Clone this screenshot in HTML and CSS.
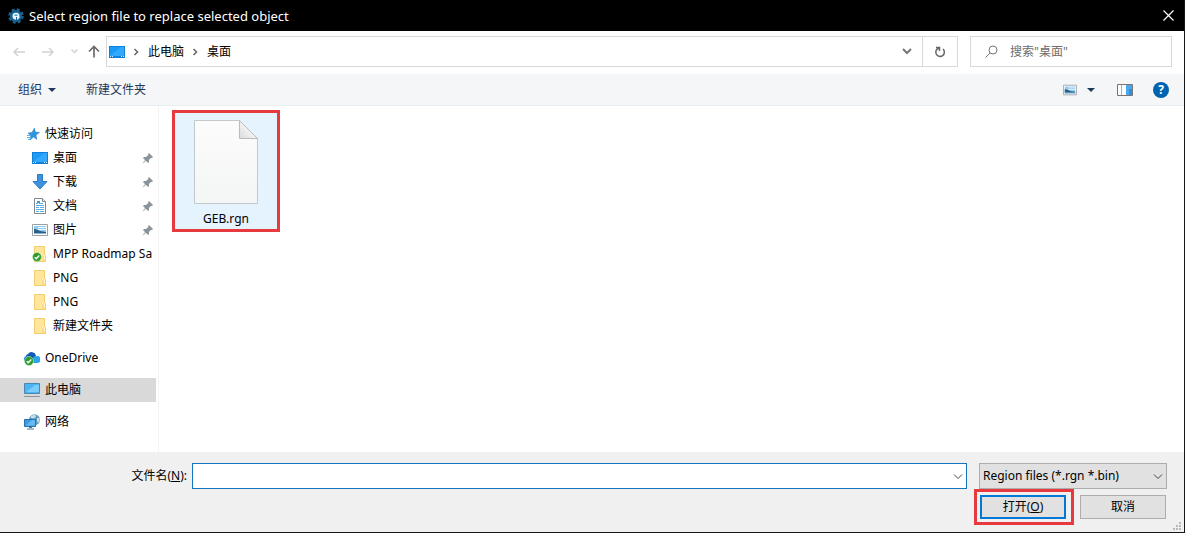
FILE: index.html
```html
<!DOCTYPE html>
<html lang="zh-CN">
<head>
  <meta charset="UTF-8">
  <meta name="viewport" content="width=device-width, initial-scale=1.0">
  <title>Select region file to replace selected object</title>
  <link rel="stylesheet" href="styles.css">
</head>
<body>

<!-- Shared icons -->
<svg class="sprite" aria-hidden="true">
  <symbol id="icon-desktop" viewBox="0 0 16 16">
    <path fill="#1180d8" d="M0 2h16v12H0z"/>
    <path fill="#1b9bf8" d="M1 3h14v9H1z"/>
    <path fill="#34a8fb" d="M1 12 12 3h3v9z"/>
    <path fill="#d8efff" d="M1 12h1v1H1zM3 12h1v1H3zM12 12h1v1h-1zM14 12h1v1h-1z"/>
  </symbol>
  <symbol id="icon-picture" viewBox="0 0 16 16">
    <path fill="#fff" stroke="#9aa1a6" d="M.5 2.500h15v11H.5z"/>
    <path fill="#8fcbf2" d="M2 4h12v8H2z"/>
    <path fill="#eef8fd" d="M6 5h8v1H6zM5 7h9v1H6z"/>
    <path fill="#2d5f82" d="M2 7c3 0 4 1 6 2l6 1v1H2z"/>
    <path fill="#86b8d8" d="M2 11h12v1H2z"/>
  </symbol>
  <symbol id="icon-folder" viewBox="0 0 16 16">
    <path fill="#f0cf72" d="M2 0h11v9h1v7H2z"/>
    <path fill="#ffe69a" d="M3 1h9v14H3z"/>
    <path fill="#fbdc80" d="M10 10h3v5h-3z"/>
    <path fill="#fff3c8" d="M12 9h1v5h-1z"/>
  </symbol>
  <symbol id="icon-pin" viewBox="0 0 12 12">
    <path fill="#8a949c" d="M7 1l4 4-1 1-1-.3L7 8v2L6 11 3.800 8.800 1.500 11 1 10.500 3.200 8.200 1 6l1-1h2l2.300-2L6 2z"/>
  </symbol>
  <symbol id="icon-check" viewBox="0 0 10 10">
    <circle cx="5" cy="5" r="4.500" fill="#2e9b2b" stroke="#e4f4e0" stroke-width=".5"/>
    <path fill="none" stroke="#fff" stroke-width="1.300" d="M2.700 5.200l1.600 1.600 3-3.300"/>
  </symbol>
  <symbol id="icon-chevron-right" viewBox="0 0 6 8">
    <path fill="none" stroke="#666" stroke-width="1.500" d="M1.500 1l3 3-3 3"/>
  </symbol>
  <symbol id="icon-chevron-down" viewBox="0 0 10 6">
    <path fill="none" stroke="currentColor" d="M1 .5l4 4 4-4"/>
  </symbol>
  <symbol id="icon-caret" viewBox="0 0 8 4">
    <path fill="#1e395b" d="M0 0h8L4 4z"/>
  </symbol>
</svg>

<div class="dialog">
  <header class="titlebar">
    <svg class="app-icon" viewBox="0 0 16 16">
      <circle cx="8" cy="8" r="6.500" fill="none" stroke="#1b5f8a" stroke-width="2.500" stroke-dasharray="3 2.100"/>
      <circle cx="8" cy="8" r="6" fill="#17618e"/>
      <path fill="#e9f5fb" d="M4.500 8.500a3.500 3.500 0 0 1 7-.5v2L9 12V9H8v3L5 10.500z"/>
      <path fill="#3d9fd2" d="M6.500 6.500h3v1.500h-3z"/>
    </svg>
    <h1>Select region file to replace selected object</h1>
    <button class="close" aria-label="Close">
      <svg width="11" height="11" viewBox="0 0 11 11"><path stroke="#fff" stroke-width="1.200" d="M.5.5l10 10M10.500.5l-10 10"/></svg>
    </button>
  </header>

  <!-- Address bar -->
  <nav class="nav-row">
    <div class="nav-buttons">
      <button aria-label="Back"><svg width="12" height="10" viewBox="0 0 12 10"><path fill="none" stroke="#d2d2d2" stroke-width="1.500" d="M12 5H1M5 1L1 5l4 4"/></svg></button>
      <button aria-label="Forward"><svg width="12" height="10" viewBox="0 0 12 10"><path fill="none" stroke="#d2d2d2" stroke-width="1.500" d="M0 5H11M7 1l4 4-4 4"/></svg></button>
      <button class="recent" aria-label="Recent locations"><svg width="7" height="5" viewBox="0 0 7 5"><path fill="none" stroke="#d2d2d2" stroke-width="1.500" d="M.5.5l3 3 3-3"/></svg></button>
      <button class="up" aria-label="Up"><svg width="12" height="13" viewBox="0 0 12 13"><path fill="none" stroke="#6b6b6b" stroke-width="1.700" d="M6 12.500V1.500M1 6.500l5-5 5 5"/></svg></button>
    </div>
    <div class="address">
      <svg class="icon"><use href="#icon-desktop"/></svg>
      <svg class="crumb-arrow"><use href="#icon-chevron-right"/></svg>
      <a href="#">此电脑</a>
      <svg class="crumb-arrow"><use href="#icon-chevron-right"/></svg>
      <a href="#">桌面</a>
      <button class="history" aria-label="Previous locations"><svg width="10" height="7" viewBox="0 0 10 7"><path fill="none" stroke="#777" stroke-width="2" d="M1 1l4 4 4-4"/></svg></button>
      <button class="refresh" aria-label="Refresh"><svg width="12" height="12" viewBox="0 0 12 12"><path fill="none" stroke="#666" stroke-width="1.500" d="M2 1.500h3.500v3.500M5 2A4.300 4.300 0 1 0 9 3"/></svg></button>
    </div>
    <div class="search">
      <svg width="13" height="13" viewBox="0 0 13 13"><path fill="none" stroke="#777" d="M5 8L.5 12.500"/><circle cx="8" cy="5" r="4" fill="none" stroke="#777"/></svg>
      <input type="search" aria-label="搜索" placeholder='搜索"桌面"'>
    </div>
  </nav>

  <div class="toolbar">
    <button>组织 <svg class="caret"><use href="#icon-caret"/></svg></button>
    <button>新建文件夹</button>
    <div class="view-tools">
      <button aria-label="View"><svg width="14" height="14"><use href="#icon-picture"/></svg></button>
      <button aria-label="View options"><svg class="caret"><use href="#icon-caret"/></svg></button>
      <button class="preview" aria-label="Preview pane">
        <svg width="16" height="12" viewBox="0 0 16 12"><path fill="#fff" stroke="#7d7470" d="M.5.5h15v11H.5z"/><path fill="#4aa8f0" d="M9 1h6v10H9z"/><path fill="#2f8fdc" d="M12 5h3v6h-3z"/><path fill="#b8aea8" d="M4 1h1v10H4z"/></svg>
      </button>
      <button class="help" aria-label="Help">?</button>
    </div>
  </div>

  <main class="content">
    <aside class="sidebar">
      <div class="group">
        <a href="#">
          <svg class="icon" viewBox="0 0 16 16"><path fill="#2e94dc" stroke="#2480c6" stroke-width=".5" d="M10.500 2l.8 4 4.200.5-3.500 2.500.8 4.500-3.300-2.500L6 14l.8-4.200L4 7l4-.6z"/><path stroke="#58b3ec" d="M3 9.500h3M3 11.500h3M4 13.500h2"/></svg>
          <span>快速访问</span>
        </a>
        <a href="#" class="child"><svg class="icon"><use href="#icon-desktop"/></svg><span>桌面</span><svg class="pin"><use href="#icon-pin"/></svg></a>
        <a href="#" class="child">
          <svg class="icon" viewBox="0 0 16 16"><path fill="#3d93dd" stroke="#2b7ac4" d="M5.500.5h5v7H15L8 15 1 7.500h4.500z"/></svg>
          <span>下载</span><svg class="pin"><use href="#icon-pin"/></svg>
        </a>
        <a href="#" class="child">
          <svg class="icon" viewBox="0 0 16 16"><path fill="#fff" stroke="#818a91" d="M2.500.5h8l3 3v12h-11z"/><path fill="#e2e6e9" stroke="#818a91" d="M10.500.5v3h3"/><path stroke="#5aaede" d="M4 5.500h2M7 5.500h4M4 7.500h8M4 9.500h3M8 9.500h4M4 11.500h8M4 13.500h3M8 13.500h4"/><path fill="#3b9bd6" d="M5 3h3v2H5z"/></svg>
          <span>文档</span><svg class="pin"><use href="#icon-pin"/></svg>
        </a>
        <a href="#" class="child"><svg class="icon"><use href="#icon-picture"/></svg><span>图片</span><svg class="pin"><use href="#icon-pin"/></svg></a>
        <a href="#" class="child"><svg class="icon" viewBox="0 0 16 16"><use href="#icon-folder"/><use href="#icon-check" x="0" y="6" width="10" height="10"/></svg><span>MPP Roadmap Sa</span></a>
        <a href="#" class="child"><svg class="icon"><use href="#icon-folder"/></svg><span>PNG</span></a>
        <a href="#" class="child"><svg class="icon"><use href="#icon-folder"/></svg><span>PNG</span></a>
        <a href="#" class="child"><svg class="icon"><use href="#icon-folder"/></svg><span>新建文件夹</span></a>
      </div>
      <div class="group">
        <a href="#" class="drive">
          <svg class="icon" viewBox="0 0 16 16"><path fill="#0f5cb4" d="M2 9a3.500 3.500 0 0 1 2-5 4.500 4.500 0 0 1 8 1.500L9 10z"/><path fill="#1689dc" d="M0 10a3 3 0 0 1 5-3l6 3-3 3H2z"/><path fill="#2aa4ee" d="M6 13l4-6.500a4 4 0 0 1 3-.5 3.500 3.500 0 0 1 0 7z"/><use href="#icon-check" x="0" y="6" width="10" height="10"/></svg>
          <span>OneDrive</span>
        </a>
      </div>
      <div class="group">
        <a href="#" class="drive selected">
          <svg class="icon" viewBox="0 0 16 16"><path fill="#4bb5f4" stroke="#4a86ad" d="M.5 1.500h15v10H.5z"/><path fill="#78cbfb" d="M2 10L11 3h4v7z"/><path fill="#8b959c" d="M0 14h16v1H0z"/></svg>
          <span>此电脑</span>
        </a>
      </div>
      <div class="group">
        <a href="#" class="drive">
          <svg class="icon" viewBox="0 0 16 16"><circle cx="10.500" cy="5.800" r="5.500" fill="#5f9bc0"/><path fill="#c4e0ec" d="M7 2l4-1.500 1 2L10 4.500 7 4zM13 4l2.500 0v3L14 9l-1-2z"/><path fill="#3e9bdf" stroke="#2873ab" d="M.5 5.500h11v7H.5z"/><path fill="#66bcf4" d="M2 11.500L8 6h3v5.500z"/><path fill="#4d7897" d="M5 13h3v1H5zM3 14.500h7v1H3z"/></svg>
          <span>网络</span>
        </a>
      </div>
    </aside>

    <section class="files">
      <a href="#" class="file">
        <svg width="64" height="84" viewBox="0 0 64 84">
          <defs>
            <linearGradient id="fold" x1="0" y1="1" x2="1" y2="0"><stop offset="0" stop-color="#dadada"/><stop offset=".5" stop-color="#f2f2f2"/></linearGradient>
            <linearGradient id="paper" x1="0" y1="0" x2="0" y2="1"><stop offset="0" stop-color="#fcfcfc"/><stop offset="1" stop-color="#f4f5f5"/></linearGradient>
          </defs>
          <path fill="url(#paper)" stroke="#c3c8cb" d="M.5.5h45l18 18v65H.5z"/>
          <path fill="url(#fold)" stroke="#b9bcbe" d="M45.500.5v18h18z"/>
        </svg>
        <span>GEB.rgn</span>
      </a>
    </section>
  </main>

  <footer class="footer">
    <label for="filename">文件名(<u>N</u>):</label>
    <div class="field filename">
      <input type="text" id="filename">
      <svg class="arrow"><use href="#icon-chevron-down"/></svg>
    </div>
    <div class="field filetype">
      <select aria-label="File type">
        <option>Region files (*.rgn *.bin)</option>
      </select>
      <svg class="arrow"><use href="#icon-chevron-down"/></svg>
    </div>
    <div class="actions">
      <span class="marked"><button class="primary">打开(<u>O</u>)</button></span>
      <button>取消</button>
    </div>
    <svg class="grip" width="9" height="9" viewBox="0 0 9 9"><path fill="#b9b9b9" d="M6 0h2v2H6zM3 3h2v2H3zM6 3h2v2H6zM0 6h2v2H0zM3 6h2v2H3zM6 6h2v2H6z"/></svg>
  </footer>
</div>

</body>
</html>
```

FILE: styles.css
```css
* {
  margin: 0;
  padding: 0;
  box-sizing: border-box;
}

body {
  font-family: "Noto Sans", "Noto Sans CJK SC", sans-serif;
  font-size: 12px;
  line-height: 16px;
  color: #000;
}

button,
input,
select {
  font: inherit;
  color: inherit;
  border: none;
  background: none;
}

a {
  color: inherit;
  text-decoration: none;
}

svg {
  display: block;
  flex-shrink: 0;
}

.sprite {
  position: absolute;
  width: 0;
  height: 0;
}

.icon {
  width: 16px;
  height: 16px;
}

.dialog {
  display: flex;
  flex-direction: column;
  min-height: 100vh;
  background-color: #fff;
  border-right: 1px solid #14161a;
  border-bottom: 1px solid #14161a;
}

/* Title bar */
.titlebar {
  display: flex;
  align-items: center;
  gap: 5px;
  height: 31px;
  padding: 0 10px 0 8px;
  background-color: #000;
  color: #fff;
}

.app-icon {
  width: 16px;
  height: 16px;
}

.titlebar h1 {
  flex: 1;
  font-size: 13px;
  font-weight: normal;
}

/* Address bar */
.nav-row {
  display: flex;
  align-items: center;
  height: 43px;
  padding: 0 12px 2px 13px;
}

.nav-buttons {
  display: flex;
  align-items: center;
  width: 93px;
}

.nav-buttons button {
  margin-right: 17px;
}

.nav-buttons .recent {
  margin-right: 10px;
}

.nav-buttons .up {
  margin-right: 0;
}

.address {
  display: flex;
  align-items: center;
  flex: 1;
  height: 31px;
  padding-left: 2px;
  border: 1px solid #d9d9d9;
}

.crumb-arrow {
  width: 6px;
  height: 8px;
  margin: 0 9px 0 8px;
}

.history {
  margin-left: auto;
  padding: 8px 10px;
}

.refresh {
  display: flex;
  align-items: center;
  justify-content: center;
  width: 35px;
  height: 29px;
  border-left: 1px solid #d9d9d9;
}

.search {
  display: flex;
  align-items: center;
  gap: 12px;
  width: 202px;
  height: 31px;
  margin-left: 12px;
  padding: 0 14px;
  border: 1px solid #d9d9d9;
}

.search input {
  flex: 1;
  min-width: 0;
  outline: none;
}

.search input::placeholder {
  color: #6d6d6d;
}

/* Toolbar */
.toolbar {
  display: flex;
  align-items: center;
  gap: 30px;
  height: 32px;
  padding: 0 15px 0 18px;
  background-color: #f5f6f7;
  border-bottom: 1px solid #e8edf2;
  color: #1e395b;
}

.toolbar button {
  display: flex;
  align-items: center;
  gap: 6px;
}

.caret {
  width: 8px;
  height: 4px;
}

.view-tools {
  display: flex;
  align-items: center;
  gap: 10px;
  margin-left: auto;
}

.view-tools .preview {
  margin: 0 10px 0 12px;
}

.view-tools .help {
  justify-content: center;
  width: 16px;
  height: 16px;
  border-radius: 50%;
  background-color: #0063b1;
  color: #fff;
  font-weight: bold;
}

/* Sidebar and files */
.content {
  display: flex;
  flex: 1;
}

.sidebar {
  width: 159px;
  padding: 16px 2px 0 0;
  border-right: 1px solid #f3f3f3;
}

.group {
  margin-bottom: 8px;
}

.sidebar a {
  display: flex;
  align-items: center;
  gap: 5px;
  height: 24px;
  padding-left: 24px;
}

.sidebar .child {
  padding-left: 32px;
}

.sidebar span {
  flex: 1;
  overflow: hidden;
  white-space: nowrap;
}

.pin {
  width: 12px;
  height: 12px;
  margin-right: 2px;
}

.sidebar .selected {
  background-color: #d9d9d9;
}

.files {
  flex: 1;
  padding: 4px 13px;
}

.file {
  display: flex;
  flex-direction: column;
  align-items: center;
  gap: 7px;
  width: 108px;
  height: 122px;
  padding-top: 7px;
  border: 3px solid #e63a3f;
  background-color: #e5f3ff;
}

/* Footer */
.footer {
  position: relative;
  display: grid;
  grid-template-columns: 187px 1fr 188px;
  row-gap: 6px;
  height: 80px;
  padding: 11px 17px 0 0;
  align-content: start;
  background-color: #f0f0f0;
}

.footer label {
  align-self: center;
  text-align: right;
}

.field {
  position: relative;
  height: 26px;
}

.filename {
  margin: 0 12px 0 5px;
}

.field input,
.field select {
  width: 100%;
  height: 26px;
  padding: 0 24px 0 3px;
  border: 1px solid #1873bd;
  background-color: #fff;
  outline: none;
  appearance: none;
}

.field select {
  border-color: #adadad;
  background-color: #e1e1e1;
}

.arrow {
  position: absolute;
  top: 11px;
  right: 4px;
  width: 10px;
  height: 6px;
  color: #444;
  pointer-events: none;
}

.actions {
  display: flex;
  justify-content: space-between;
  grid-column: 3;
  padding: 0 1px;
}

.actions button {
  display: block;
  width: 86px;
  height: 24px;
  border: 1px solid #adadad;
  background-color: #e1e1e1;
}

.actions .primary {
  border: 2px solid #0078d7;
}

.marked {
  position: relative;
}

.marked::after {
  content: "";
  position: absolute;
  inset: -6px -8px -6px -6px;
  border: 3px solid #e63a3f;
  pointer-events: none;
}

.grip {
  position: absolute;
  right: 2px;
  bottom: 1px;
}
```
